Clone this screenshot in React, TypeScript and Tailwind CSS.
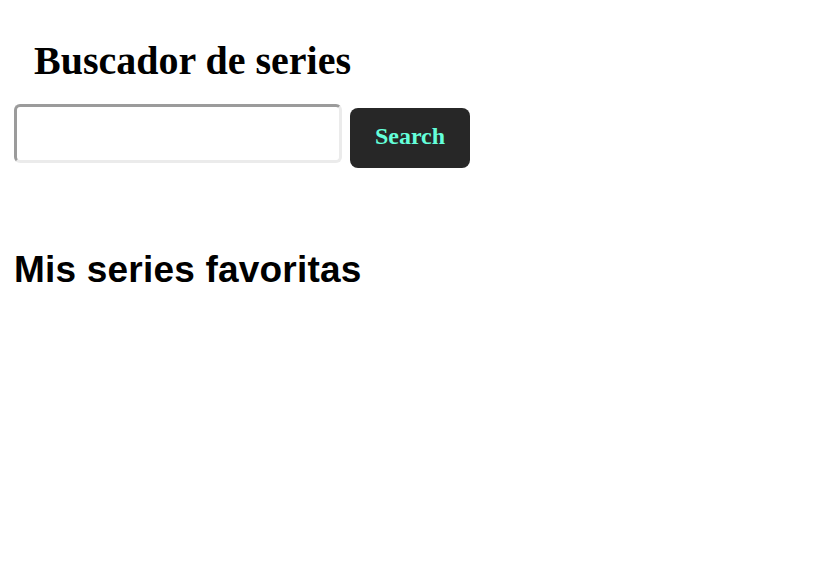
export default function App() {
  return (
    <div className="min-h-[584px] bg-white px-[14px] pt-[38px]">
      <h1 className="pl-5 font-['Liberation_Serif',serif] text-[40px] font-bold leading-[46px] text-black">
        Buscador de series
      </h1>
      <form className="mt-[20px] flex items-start gap-2" onSubmit={(e) => e.preventDefault()}>
        <input
          type="text"
          className="h-[59px] w-[328px] rounded-md border-[3px] border-t-[#9b9b9b] border-l-[#9b9b9b] border-r-[#ebebeb] border-b-[#ebebeb] bg-white px-2 outline-none"
        />
        <button
          type="submit"
          className="mt-1 h-[60px] w-[120px] rounded-lg bg-[#272727] pb-[4px] font-['Liberation_Serif',serif] text-[24px] font-bold text-[#64ffda]"
        >
          Search
        </button>
      </form>
      <h2 className="mt-[79px] font-['Liberation_Sans',Arial,sans-serif] text-[37px] font-bold leading-[45px] tracking-[0.2px] text-black">
        Mis series favoritas
      </h2>
    </div>
  );
}
